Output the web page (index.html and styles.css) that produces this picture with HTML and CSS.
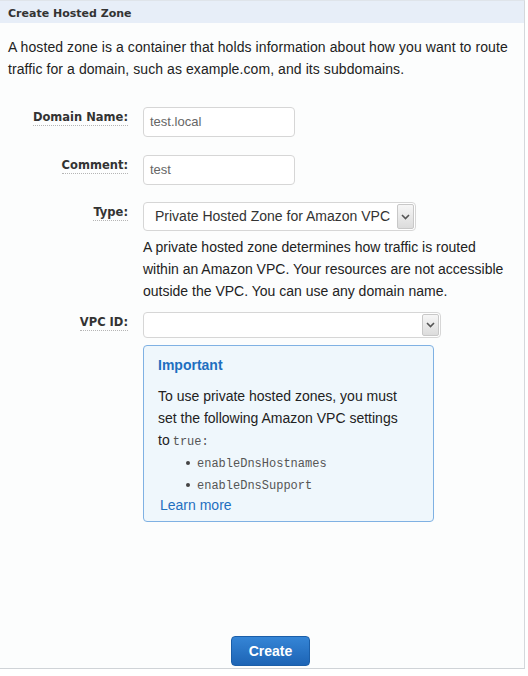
FILE: index.html
```html
<!DOCTYPE html>
<html lang="en">
<head>
  <meta charset="UTF-8" />
  <title>Create Hosted Zone</title>
  <link rel="stylesheet" href="styles.css">
</head>
<body>
  <div class="panel">
    <div class="panel-head">Create Hosted Zone</div>
    <div class="panel-body">
      <p class="intro">A hosted zone is a container that holds information about how you want to route traffic for a domain, such as example.com, and its subdomains.</p>

      <div class="form-row row-domain">
        <label class="field-label"><span>Domain Name:</span></label>
        <div class="field">
          <div class="text-input short">test.local</div>
        </div>
      </div>

      <div class="form-row row-comment">
        <label class="field-label"><span>Comment:</span></label>
        <div class="field">
          <div class="text-input short">test</div>
        </div>
      </div>

      <div class="form-row row-type">
        <label class="field-label"><span>Type:</span></label>
        <div class="field">
          <div class="select type-select">
            <span class="select-value">Private Hosted Zone for Amazon VPC</span>
            <span class="select-btn">
              <svg width="9" height="6" viewBox="0 0 9 6"><path d="M1 1l3.5 3.5L8 1" fill="none" stroke="#555" stroke-width="1.6"/></svg>
            </span>
          </div>
          <p class="help">A private hosted zone determines how traffic is routed within an Amazon VPC. Your resources are not accessible outside the VPC. You can use any domain name.</p>
        </div>
      </div>

      <div class="form-row row-vpc">
        <label class="field-label"><span>VPC ID:</span></label>
        <div class="field">
          <div class="select vpc-select">
            <span class="select-value"></span>
            <span class="select-btn">
              <svg width="9" height="6" viewBox="0 0 9 6"><path d="M1 1l3.5 3.5L8 1" fill="none" stroke="#555" stroke-width="1.6"/></svg>
            </span>
          </div>
          <div class="notice">
            <div class="notice-title">Important</div>
            <p class="notice-text">To use private hosted zones, you must set the following Amazon VPC settings</p>
            <div class="notice-line"><span>to</span> <code>true:</code></div>
            <ul class="notice-list">
              <li><code>enableDnsHostnames</code></li>
              <li><code>enableDnsSupport</code></li>
            </ul>
            <a class="notice-link" href="#">Learn more</a>
          </div>
        </div>
      </div>

      <div class="actions">
        <button class="create-btn">Create</button>
      </div>
    </div>
  </div>
</body>
</html>
```

FILE: styles.css
```css
* {
  margin: 0;
  padding: 0;
  box-sizing: border-box;
}
html, body {
  width: 100%;
  height: 100%;
  background: #fff;
}
body {
  font-family: 'Liberation Sans', Arial, sans-serif;
  font-size: 14px;
  color: #333;
}
.panel {
  width: 525px;
  height: 669px;
  background: #fcfdfd;
  border-top: 1px solid #dfe4ea;
  border-right: 1px solid #d4d8dc;
  border-bottom: 1px solid #cfd3d7;
  display: flex;
  flex-direction: column;
}
.panel-head {
  height: 22px;
  background: #e7eef8;
  padding: 6px 8px 0;
  font-family: 'DejaVu Sans', Verdana, sans-serif;
  font-weight: bold;
  font-size: 11px;
  color: #333;
}
.panel-body {
  flex: 1;
  display: flex;
  flex-direction: column;
  padding: 0 8px;
}
.intro {
  margin-top: 13px;
  line-height: 22px;
  color: #222;
  letter-spacing: 0.08px;
}
.form-row {
  display: flex;
  gap: 15px;
}
.row-domain { margin-top: 27px; }
.row-comment { margin-top: 18px; }
.row-type { margin-top: 17px; }
.row-vpc { margin-top: 10px; }
.field-label {
  width: 120px;
  flex: none;
  text-align: right;
  padding-top: 3px;
  font-family: 'DejaVu Sans', Verdana, sans-serif;
  font-weight: bold;
  font-size: 11.5px;
  color: #333;
}
.field-label span {
  border-bottom: 1px dotted #b5b5b5;
  padding-bottom: 1px;
}
.field {
  display: flex;
  flex-direction: column;
}
.text-input {
  width: 152px;
  height: 30px;
  border: 1px solid #d6d6d6;
  border-radius: 4px;
  background: #fff;
  padding: 0 6px;
  line-height: 28px;
  font-size: 13px;
  color: #666;
}
.select {
  display: flex;
  align-items: stretch;
  border: 1px solid #d6d6d6;
  border-radius: 4px;
  background: #fff;
  overflow: hidden;
}
.type-select {
  width: 273px;
  height: 29px;
}
.vpc-select {
  width: 298px;
  height: 26px;
}
.select-value {
  flex: 1;
  padding-left: 11px;
  line-height: 27px;
  color: #333;
}
.select-btn {
  width: 17px;
  margin: 1px;
  border: 1px solid #c8c8c8;
  border-radius: 2px;
  background: linear-gradient(#f6f6f6, #dcdcdc);
  display: flex;
  align-items: center;
  justify-content: center;
}
.help {
  margin-top: 5px;
  width: 370px;
  line-height: 22px;
  color: #222;
}
.notice {
  margin-top: 7px;
  width: 291px;
  height: 177px;
  border: 1px solid #7fb1e3;
  border-radius: 4px;
  background: #eff7fc;
  padding: 8px 14px 0;
}
.notice-title {
  font-weight: bold;
  color: #1d6fc0;
  line-height: 22px;
}
.notice-text {
  margin-top: 9px;
  width: 248px;
  line-height: 22px;
  color: #222;
}
.notice-line {
  display: flex;
  align-items: baseline;
  gap: 3px;
  line-height: 22px;
  color: #222;
}
.notice-line code,
.notice-list code {
  font-family: 'Liberation Mono', 'Courier New', monospace;
  font-size: 12px;
  line-height: 1;
  color: #555;
}
.notice-list {
  list-style: none;
  padding-left: 28px;
}
.notice-list li {
  line-height: 22px;
  position: relative;
  padding-left: 11px;
}
.notice-list li::before {
  content: "";
  position: absolute;
  left: 0;
  top: 10px;
  width: 4px;
  height: 4px;
  border-radius: 50%;
  background: #444;
}
.notice-link {
  display: block;
  margin-left: 2px;
  color: #1f6fc0;
  text-decoration: none;
  line-height: 20px;
}
.actions {
  margin-top: auto;
  margin-bottom: 2px;
  padding-left: 223px;
}
.create-btn {
  width: 79px;
  height: 30px;
  border: 1px solid #1b5ea8;
  border-radius: 4px;
  background: linear-gradient(#3585d6, #1d64b5);
  color: #fff;
  font-family: 'Liberation Sans', Arial, sans-serif;
  font-weight: bold;
  font-size: 14px;
}
```
